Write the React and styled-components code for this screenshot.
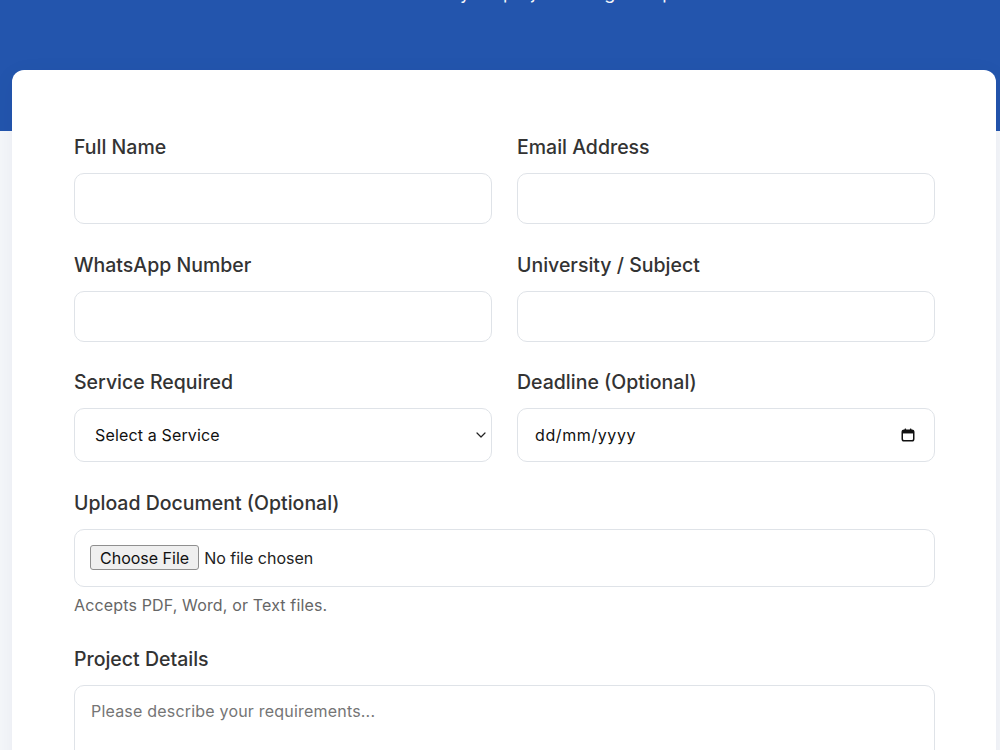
import React from "react";
import styled, { createGlobalStyle } from "styled-components";

const GlobalStyle = createGlobalStyle`
  * {
    box-sizing: border-box;
  }

  body {
    margin: 0;
    background: #f5f7fa;
    font-family: Inter, "Noto Sans", sans-serif;
    color: #333;
  }
`;

// the shot is scrolled down a little, so the hero title sits above the fold
const Page = styled.div`
  margin-top: -125px;
`;

const Hero = styled.header`
  background: #2355ad;
  color: #fff;
  text-align: center;
  padding: 48px 20px 124px;
`;

const Title = styled.h1`
  margin: 0 0 12px;
  font-size: 36px;
  line-height: 44px;
  font-weight: 700;
`;

const Subtitle = styled.p`
  margin: 0;
  padding-left: 62px;
  font-size: 18px;
  line-height: 28px;
  opacity: 0.95;
`;

const Main = styled.main`
  margin-top: -61px;
  padding: 0 4px 40px 12px;
`;

const Card = styled.section`
  background: #fff;
  border-radius: 12px;
  padding: 63px 61px 62px 62px;
  box-shadow: 0 6px 24px rgba(15, 40, 90, 0.06);
`;

const Grid = styled.form`
  display: grid;
  grid-template-columns: 1fr 1fr;
  column-gap: 25px;
  row-gap: 26.5px;
`;

const Field = styled.div`
  display: flex;
  flex-direction: column;
  grid-column: ${(p) => (p.$wide ? "1 / -1" : "auto")};
`;

const Label = styled.label`
  font-size: 19.5px;
  line-height: 29px;
  font-weight: 500;
  color: #333;
  margin-bottom: 11px;
`;

const controlBase = `
  width: 100%;
  font-family: Inter, "Noto Sans", sans-serif;
  font-size: 16px;
  color: #111;
  background: #fff;
  border: 1px solid #dfe3e8;
  border-radius: 10px;
  outline: none;
`;

const Input = styled.input`
  ${controlBase}
  height: 51px;
  padding: 0 16px;
`;

const ControlWrap = styled.div`
  position: relative;
`;

const Select = styled.select`
  ${controlBase}
  height: 54px;
  padding: 0 20px;
  letter-spacing: 0.15px;
  appearance: none;
`;

const DateInput = styled.input`
  ${controlBase}
  height: 54px;
  padding: 0 17px;
  letter-spacing: 0.6px;

  &::placeholder {
    color: #111;
  }
`;

const IconSlot = styled.span`
  position: absolute;
  top: 50%;
  right: ${(p) => p.$right}px;
  transform: translateY(-50%);
  display: flex;
  pointer-events: none;
`;

const FileBox = styled.div`
  ${controlBase}
  height: 58px;
  padding: 0 15px;
  display: flex;
  align-items: center;
`;

const FileInput = styled.input`
  font-family: Inter, "Noto Sans", sans-serif;
  font-size: 16px;
  color: #222;

  &::file-selector-button {
    font: inherit;
    color: #111;
    height: 25px;
    padding: 0 9px;
    margin-right: 5px;
    background: #efefef;
    border: 1px solid #8f8f8f;
    border-radius: 3px;
  }
`;

const Help = styled.small`
  margin: 7px 0 3px;
  font-size: 16px;
  line-height: 22px;
  letter-spacing: 0.15px;
  color: #666;
`;

const TextArea = styled.textarea`
  ${controlBase}
  height: 150px;
  padding: 16px;
  resize: vertical;
  line-height: 19px;
  letter-spacing: 0.2px;

  &::placeholder {
    color: #757575;
  }
`;

const Chevron = () => (
  <svg width="10" height="6" viewBox="0 0 10 6" fill="none">
    <path d="M1 1l4 4 4-4" stroke="#222" strokeWidth="1.2" strokeLinecap="round" strokeLinejoin="round" />
  </svg>
);

const CalendarIcon = () => (
  <svg width="14" height="14" viewBox="0 0 14 14" fill="none">
    <rect x="1.25" y="2.25" width="11.5" height="10.5" rx="1.8" stroke="#111" strokeWidth="1.5" />
    <rect x="1.25" y="2.25" width="11.5" height="3.2" fill="#111" />
    <rect x="3.6" y="0.5" width="1.5" height="2.5" rx="0.5" fill="#111" />
    <rect x="8.9" y="0.5" width="1.5" height="2.5" rx="0.5" fill="#111" />
  </svg>
);

const App = () => {
  return (
    <Page>
      <GlobalStyle />
      <Hero>
        <Title>Get Academic Help</Title>
        <Subtitle>Tell us about your project and get help fast.</Subtitle>
      </Hero>
      <Main>
        <Card>
          <Grid>
            <Field>
              <Label>Full Name</Label>
              <Input type="text" />
            </Field>
            <Field>
              <Label>Email Address</Label>
              <Input type="email" />
            </Field>
            <Field>
              <Label>WhatsApp Number</Label>
              <Input type="tel" />
            </Field>
            <Field>
              <Label>University / Subject</Label>
              <Input type="text" />
            </Field>
            <Field>
              <Label>Service Required</Label>
              <ControlWrap>
                <Select defaultValue="">
                  <option value="">Select a Service</option>
                  <option value="essay">Essay Writing</option>
                  <option value="thesis">Thesis Support</option>
                  <option value="editing">Proofreading &amp; Editing</option>
                </Select>
                <IconSlot $right={6}>
                  <Chevron />
                </IconSlot>
              </ControlWrap>
            </Field>
            <Field>
              <Label>Deadline (Optional)</Label>
              <ControlWrap>
                <DateInput type="text" placeholder="dd/mm/yyyy" />
                <IconSlot $right={20}>
                  <CalendarIcon />
                </IconSlot>
              </ControlWrap>
            </Field>
            <Field $wide>
              <Label>Upload Document (Optional)</Label>
              <FileBox>
                <FileInput type="file" accept=".pdf,.doc,.docx,.txt" />
              </FileBox>
              <Help>Accepts PDF, Word, or Text files.</Help>
            </Field>
            <Field $wide>
              <Label>Project Details</Label>
              <TextArea placeholder="Please describe your requirements..." />
            </Field>
          </Grid>
        </Card>
      </Main>
    </Page>
  );
};

export default App;
